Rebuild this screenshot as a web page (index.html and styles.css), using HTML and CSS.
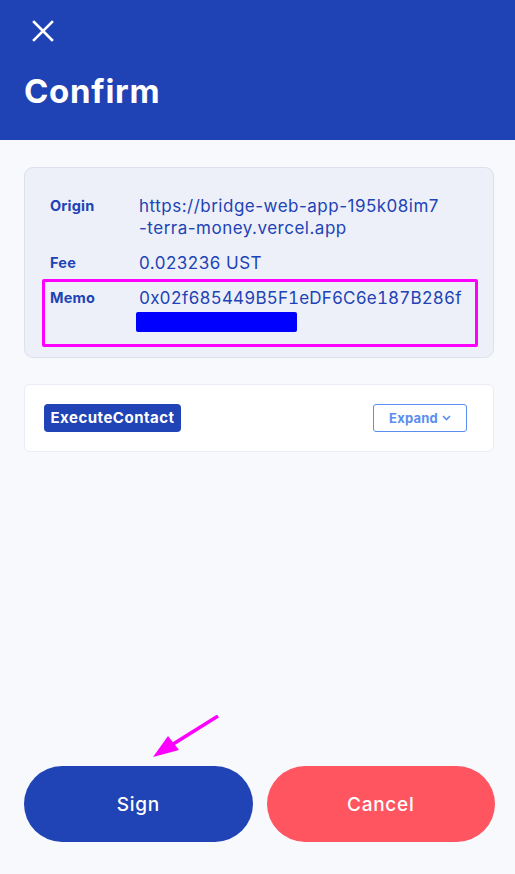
FILE: index.html
```html
<!DOCTYPE html>
<html>
<head>
<meta charset="utf-8">
<link rel="stylesheet" href="styles.css">
</head>
<body>
<div class="page">
  <header class="header">
    <button class="close" aria-label="Close">
      <svg width="22" height="22" viewBox="0 0 22 22"><path d="M2 2 L20 20 M20 2 L2 20" stroke="#fff" stroke-width="2.6" stroke-linecap="square"/></svg>
    </button>
    <h1 class="title">Confirm</h1>
  </header>
  <main class="content">
    <section class="info">
      <div class="row">
        <div class="label">Origin</div>
        <div class="value">https://bridge-web-app-195k08im7<br>-terra-money.vercel.app</div>
      </div>
      <div class="row">
        <div class="label">Fee</div>
        <div class="value">0.023236 UST</div>
      </div>
      <div class="row memo">
        <div class="label">Memo</div>
        <div class="value hex">0x02f685449B5F1eDF6C6e187B286f<div class="redact"></div></div>
      </div>
    </section>
    <section class="msg">
      <span class="badge">ExecuteContact</span>
      <button class="expand">Expand <svg width="9" height="6" viewBox="0 0 9 6"><path d="M1 1 L4.5 4.5 L8 1" fill="none" stroke="#5a8ef0" stroke-width="1.6"/></svg></button>
    </section>
  </main>
  <footer class="actions">
    <button class="btn sign">Sign</button>
    <button class="btn cancel">Cancel</button>
    <svg class="arrow" width="80" height="50" viewBox="0 0 80 50"><line x1="66" y1="1" x2="18" y2="31" stroke="#ff00ff" stroke-width="3.5"/><polygon points="1,42 16,21 27,35" fill="#ff00ff"/></svg>
  </footer>
</div>
</body>
</html>
```
FILE: styles.css
```css
* { box-sizing: border-box; }
html, body { margin: 0; padding: 0; }
body {
  background: #f8f9fd;
  font-family: Inter, "Open Sans", sans-serif;
  color: #2043b5;
}
.page {
  min-height: 874px;
  display: flex;
  flex-direction: column;
}
.header {
  background: #1f43b4;
  height: 140px;
  padding: 20px 24px 0;
  color: #fff;
}
.close {
  background: none;
  border: 0;
  padding: 0;
  margin-left: 8px;
  display: block;
  width: 22px;
  height: 22px;
  cursor: pointer;
}
.title {
  margin: 29px 0 0;
  font-size: 33px;
  font-weight: 700;
  line-height: 40px;
  letter-spacing: 0.7px;
}
.content {
  flex: 1;
  padding: 27px 21px 0 24px;
  display: flex;
  flex-direction: column;
  gap: 26px;
}
.info {
  background: #eef0f9;
  border: 1px solid #dde1ee;
  border-radius: 9px;
  padding: 27px 25px 15px;
  display: flex;
  flex-direction: column;
  gap: 13px;
}
.row {
  display: grid;
  grid-template-columns: 89px 1fr;
  font-size: 17px;
  line-height: 22px;
}
.label {
  font-weight: 700;
  font-size: 14.5px;
  letter-spacing: 0.2px;
}
.value {
  font-weight: 400;
  letter-spacing: 0.5px;
  white-space: nowrap;
}
.hex {
  font-variant-numeric: tabular-nums;
  letter-spacing: 0.15px;
}
.memo {
  position: relative;
  padding-bottom: 10px;
}
.memo::after {
  content: "";
  position: absolute;
  left: -8px;
  right: -10px;
  top: -8px;
  bottom: -5px;
  border: 3px solid #ff00ff;
  border-radius: 2px;
}
.redact {
  width: 161px;
  height: 20px;
  background: #0000ff;
  border-radius: 2px;
  margin: 3px 0 0 -3px;
}
.msg {
  background: #fff;
  border: 1px solid #e9ecf5;
  border-radius: 6px;
  height: 68px;
  padding: 0 26px 0 19px;
  display: flex;
  align-items: center;
  justify-content: space-between;
}
.badge {
  background: #2043b5;
  color: #fff;
  font-weight: 700;
  font-size: 15px;
  letter-spacing: 0.5px;
  height: 28px;
  line-height: 28px;
  padding: 0;
  border-radius: 4px;
  width: 137px;
  text-align: center;
}
.expand {
  width: 94px;
  height: 28px;
  border: 1px solid #5a8ef0;
  border-radius: 3px;
  background: #fff;
  color: #5a8ef0;
  font-family: inherit;
  font-weight: 700;
  font-size: 13px;
  letter-spacing: 0.2px;
  display: flex;
  align-items: center;
  justify-content: center;
  gap: 4px;
  padding: 0;
}
.actions {
  position: relative;
  display: flex;
  gap: 14px;
  padding: 0 20px 32px 24px;
}
.btn {
  flex: 1;
  height: 76px;
  border: 0;
  border-radius: 38px;
  color: #fff;
  font-family: inherit;
  font-size: 19px;
  font-weight: 500;
  letter-spacing: 0.7px;
  cursor: pointer;
}
.sign { background: #2043b5; }
.cancel { background: #ff5561; }
.arrow {
  position: absolute;
  left: 152px;
  top: -51px;
}
```
